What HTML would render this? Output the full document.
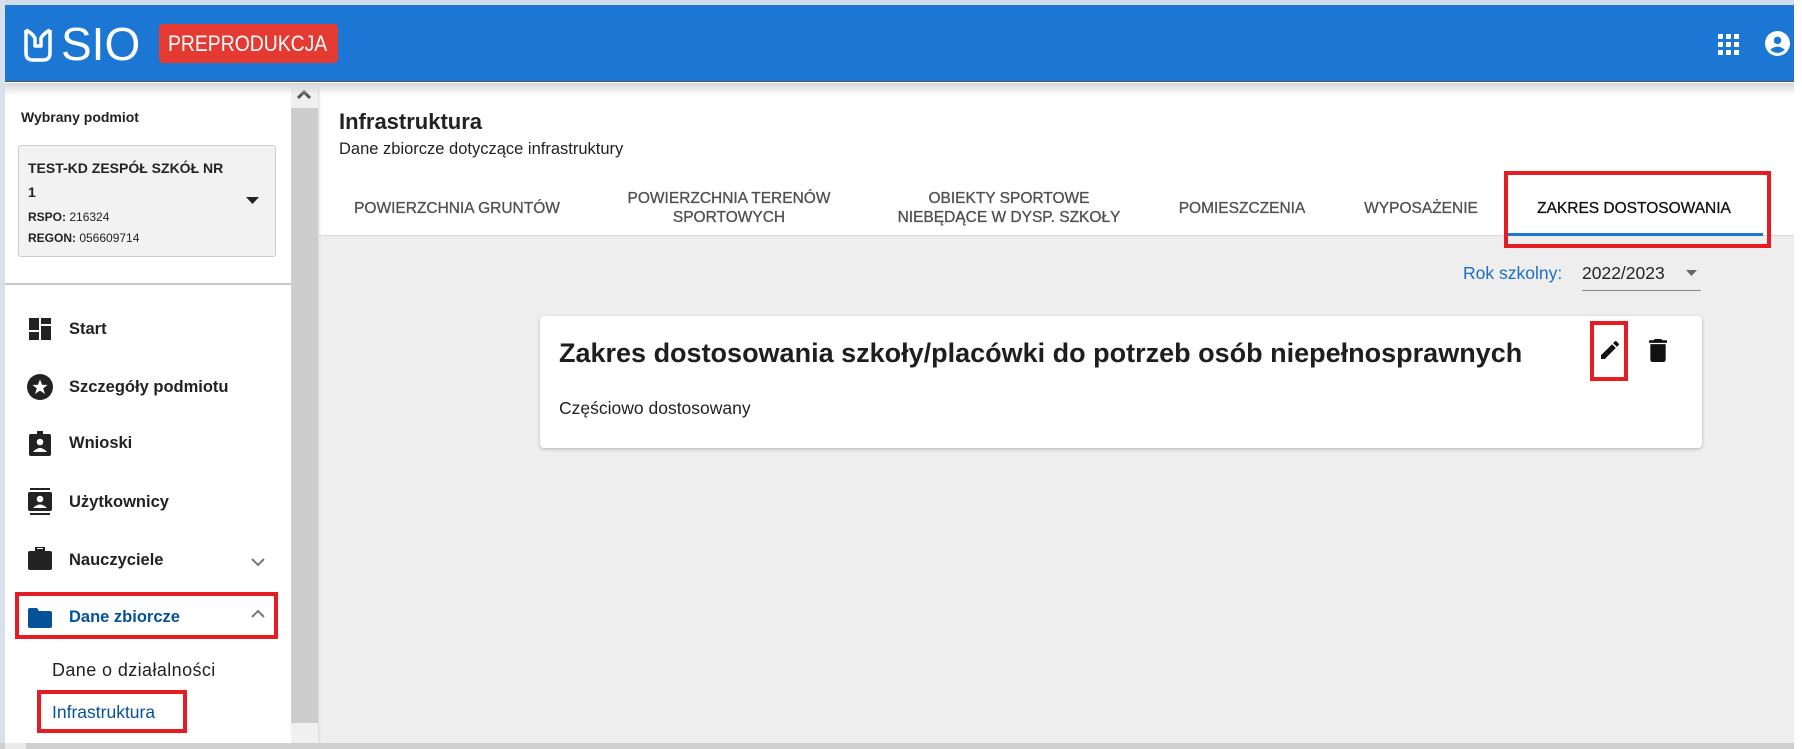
<!DOCTYPE html>
<html><head><meta charset="utf-8"><style>
*{margin:0;padding:0;box-sizing:border-box}
body{width:1802px;height:749px;overflow:hidden;position:relative;background:#fff;font-family:"Liberation Sans",Roboto,sans-serif;color:#222}
.a{position:absolute}
.t{white-space:nowrap}
</style></head><body>
<div class="a" style="left:0;top:0;width:1802px;height:5px;background:#d3dbe6"></div>
<div class="a" style="left:0;top:0;width:5px;height:749px;background:#d8e0ec"></div>
<div class="a" style="left:1794px;top:0;width:8px;height:749px;background:#fff"></div>
<!-- header -->
<div class="a" style="left:5px;top:5px;width:1789px;height:77px;background:#1b77d3;border-bottom:1px solid #555"></div>
<div class="a" style="left:5px;top:83px;width:1789px;height:12px;background:linear-gradient(#d6d6d6,rgba(255,255,255,0));z-index:3"></div>
<svg class="a" style="left:23px;top:27px" width="30" height="36" viewBox="0 0 30 36"><path d="M3 3 L3 26 Q3 33 10 33 L20 33 Q27 33 27 26 L27 3 M3 3 Q9 6 12 11 L12 19 L18 19 L18 11 Q21 6 27 3" fill="none" stroke="#fff" stroke-width="3.5" stroke-linejoin="round"/></svg>
<div class="a t" style="left:61px;top:19px;font-size:46px;color:#fff;line-height:50px">SIO</div>
<div class="a" style="left:159px;top:24px;width:179px;height:39px;background:#e53a32;border-radius:4px"></div>
<div class="a t" style="left:168px;top:27px;font-size:22px;color:#fff;line-height:34px;transform:scaleX(.88);transform-origin:left">PREPRODUKCJA</div>
<svg class="a" style="left:1718px;top:34px" width="21" height="21" viewBox="0 0 21 21" fill="#fff"><rect x="0" y="0" width="5" height="5"/><rect x="8" y="0" width="5" height="5"/><rect x="16" y="0" width="5" height="5"/><rect x="0" y="8" width="5" height="5"/><rect x="8" y="8" width="5" height="5"/><rect x="16" y="8" width="5" height="5"/><rect x="0" y="16" width="5" height="5"/><rect x="8" y="16" width="5" height="5"/><rect x="16" y="16" width="5" height="5"/></svg>
<svg class="a" style="left:1765px;top:31px" width="25" height="25" viewBox="0 0 24 24"><circle cx="12" cy="12" r="12" fill="#fff"/><circle cx="12" cy="9" r="3.6" fill="#1b77d3"/><path d="M5 18 Q12 12 19 18 Q16 21 12 21 Q8 21 5 18Z" fill="#1b77d3"/></svg>
<!-- sidebar -->
<div class="a" style="left:291px;top:83px;width:27px;height:640px;background:#cdcdcd"></div>
<div class="a" style="left:291px;top:83px;width:27px;height:25px;background:#f0f0f0"></div>
<svg class="a" style="left:296px;top:88px" width="16" height="12" viewBox="0 0 16 12"><path d="M2 10 L8 4 L14 10" fill="none" stroke="#555" stroke-width="3"/></svg>
<div class="a" style="left:291px;top:723px;width:27px;height:20px;background:#f0f0f0"></div>
<div class="a" style="left:0;top:743px;width:1794px;height:6px;background:#cfcfcf"></div>
<div class="a" style="left:5px;top:743px;width:21px;height:6px;background:#eaeaea"></div>
<div class="a t" style="left:21px;top:108px;font-size:14px;font-weight:bold;line-height:18px">Wybrany podmiot</div>
<div class="a" style="left:18px;top:145px;width:258px;height:112px;background:#f2f2f2;border:1px solid #ccc;border-radius:3px"></div>
<div class="a t" style="left:28px;top:158px;font-size:14px;font-weight:bold;line-height:20px">TEST-KD ZESPÓŁ SZKÓŁ NR</div>
<div class="a t" style="left:28px;top:182px;font-size:14px;font-weight:bold;line-height:20px">1</div>
<div class="a t" style="left:28px;top:209px;font-size:12px;line-height:16px"><b>RSPO:</b> 216324</div>
<div class="a t" style="left:28px;top:230px;font-size:12px;line-height:16px"><b>REGON:</b> 056609714</div>
<svg class="a" style="left:246px;top:197px" width="13" height="8"><path d="M0 0 L13 0 L6.5 7Z" fill="#222"/></svg>
<div class="a" style="left:5px;top:283px;width:286px;height:2px;background:#c8c8c8"></div>
<!-- menu -->
<div style="position:absolute;left:0;top:0;font-size:16.5px;font-weight:bold;line-height:22px">
<div class="a t" style="left:69px;top:318px">Start</div>
<div class="a t" style="left:69px;top:376px">Szczegóły podmiotu</div>
<div class="a t" style="left:69px;top:432px">Wnioski</div>
<div class="a t" style="left:69px;top:491px">Użytkownicy</div>
<div class="a t" style="left:69px;top:549px">Nauczyciele</div>
<div class="a t" style="left:69px;top:606px;color:#05529a">Dane zbiorcze</div>
</div>
<svg class="a" style="left:29px;top:318px" width="22" height="22" viewBox="0 0 22 22" fill="#222"><rect x="0" y="0" width="10" height="12"/><rect x="12" y="0" width="10" height="6"/><rect x="0" y="14" width="10" height="8"/><rect x="12" y="8" width="10" height="14"/></svg>
<svg class="a" style="left:27px;top:374px" width="26" height="26" viewBox="0 0 24 24"><circle cx="12" cy="12" r="12" fill="#222"/><path d="M12 5 L14 10 L19 10 L15 13.3 L16.5 18.5 L12 15.3 L7.5 18.5 L9 13.3 L5 10 L10 10Z" fill="#fff"/></svg>
<svg class="a" style="left:29px;top:431px" width="22" height="25" viewBox="0 0 22 25"><rect x="0" y="3" width="22" height="22" rx="2" fill="#222"/><rect x="8" y="0" width="6" height="5" fill="#222"/><circle cx="11" cy="11" r="3.3" fill="#fff"/><path d="M4 21 Q11 13 18 21Z" fill="#fff"/></svg>
<svg class="a" style="left:28px;top:488px" width="24" height="28" viewBox="0 0 24 28" fill="#222"><rect x="2" y="0" width="20" height="2"/><rect x="0" y="4" width="24" height="19" rx="2"/><rect x="2" y="25" width="20" height="2"/><circle cx="12" cy="11" r="3.3" fill="#fff"/><path d="M5 20 Q12 13 19 20Z" fill="#fff"/></svg>
<svg class="a" style="left:28px;top:547px" width="24" height="24" viewBox="0 0 24 24" fill="#222"><rect x="8" y="0" width="8" height="3" fill="none" stroke="#222" stroke-width="2"/><rect x="0" y="4" width="24" height="19" rx="2"/></svg>
<svg class="a" style="left:251px;top:558px" width="14" height="9"><path d="M1 1 L7 7 L13 1" fill="none" stroke="#777" stroke-width="2"/></svg>
<div class="a" style="left:15px;top:592px;width:263px;height:47px;border:4px solid #e51c23"></div>
<svg class="a" style="left:28px;top:608px" width="24" height="20" viewBox="0 0 24 20"><path d="M0 2 Q0 0 2 0 L9 0 L11 3 L22 3 Q24 3 24 5 L24 18 Q24 20 22 20 L2 20 Q0 20 0 18Z" fill="#05529a"/></svg>
<svg class="a" style="left:251px;top:609px" width="14" height="9"><path d="M1 8 L7 2 L13 8" fill="none" stroke="#777" stroke-width="2"/></svg>
<div class="a t" style="left:52px;top:659px;font-size:18px;letter-spacing:.4px;line-height:22px">Dane o działalności</div>
<div class="a" style="left:37px;top:690px;width:150px;height:43px;border:4px solid #e51c23"></div>
<div class="a t" style="left:52px;top:701px;font-size:17.5px;line-height:22px;color:#05529a">Infrastruktura</div>
<!-- main -->
<div class="a" style="left:318px;top:83px;width:1476px;height:660px;background:#eee"></div>
<div class="a" style="left:318px;top:83px;width:1476px;height:153px;background:#fff;border-bottom:1px solid #d8d8d8"></div>
<div class="a" style="left:318px;top:83px;width:3px;height:660px;background:linear-gradient(90deg,#ddd,rgba(0,0,0,0))"></div>
<div class="a t" style="left:339px;top:108px;font-size:22px;font-weight:bold;line-height:28px">Infrastruktura</div>
<div class="a t" style="left:339px;top:139px;font-size:16.5px;line-height:20px">Dane zbiorcze dotyczące infrastruktury</div>
<div style="position:absolute;top:0;left:0;font-size:15.5px;color:#505050;line-height:19px;-webkit-text-stroke:.3px #505050">
<div class="a t" style="left:457px;top:199px;transform:translateX(-50%)">POWIERZCHNIA GRUNTÓW</div>
<div class="a t" style="left:729px;top:189px;transform:translateX(-50%);text-align:center">POWIERZCHNIA TERENÓW<br>SPORTOWYCH</div>
<div class="a t" style="left:1009px;top:189px;transform:translateX(-50%);text-align:center">OBIEKTY SPORTOWE<br>NIEBĘDĄCE W DYSP. SZKOŁY</div>
<div class="a t" style="left:1242px;top:199px;transform:translateX(-50%)">POMIESZCZENIA</div>
<div class="a t" style="left:1421px;top:199px;transform:translateX(-50%)">WYPOSAŻENIE</div>
<div class="a t" style="left:1634px;top:199px;transform:translateX(-50%);color:#111;-webkit-text-stroke:.3px #111">ZAKRES DOSTOSOWANIA</div>
</div>
<div class="a" style="left:1508px;top:233px;width:255px;height:3px;background:#1b77d3"></div>
<div class="a" style="left:1504px;top:171px;width:267px;height:77px;border:4px solid #e51c23"></div>
<div class="a t" style="left:1463px;top:262px;font-size:17.5px;line-height:22px;color:#1b6ec2">Rok szkolny:</div>
<div class="a t" style="left:1582px;top:262px;font-size:17.5px;line-height:22px">2022/2023</div>
<svg class="a" style="left:1686px;top:270px" width="11" height="6"><path d="M0 0 L11 0 L5.5 6Z" fill="#666"/></svg>
<div class="a" style="left:1582px;top:290px;width:119px;height:1px;background:#888"></div>
<div class="a" style="left:540px;top:316px;width:1162px;height:132px;background:#fff;border-radius:4px;box-shadow:0 1px 3px rgba(0,0,0,.25)"></div>
<div class="a t" style="left:559px;top:337px;font-size:27px;font-weight:bold;line-height:32px;color:#1e1e1e">Zakres dostosowania szkoły/placówki do potrzeb osób niepełnosprawnych</div>
<div class="a t" style="left:559px;top:397px;font-size:17.5px;line-height:22px">Częściowo dostosowany</div>
<div class="a" style="left:1590px;top:321px;width:38px;height:60px;border:4px solid #e51c23"></div>
<svg class="a" style="left:1598px;top:338px" width="24" height="24" viewBox="0 0 24 24"><path d="M3 17.25V21h3.75L17.81 9.94l-3.75-3.75L3 17.25zM20.71 7.04a1 1 0 000-1.41l-2.34-2.34a1 1 0 00-1.41 0l-1.83 1.83 3.75 3.75 1.83-1.83z" fill="#111"/></svg>
<svg class="a" style="left:1649px;top:339px" width="18" height="23" viewBox="0 0 14 18"><path d="M1 16 Q1 18 3 18 L11 18 Q13 18 13 16 L13 4 L1 4Z M14 1 L10.5 1 L9.5 0 L4.5 0 L3.5 1 L0 1 L0 3 L14 3Z" fill="#111"/></svg>
</body></html>
